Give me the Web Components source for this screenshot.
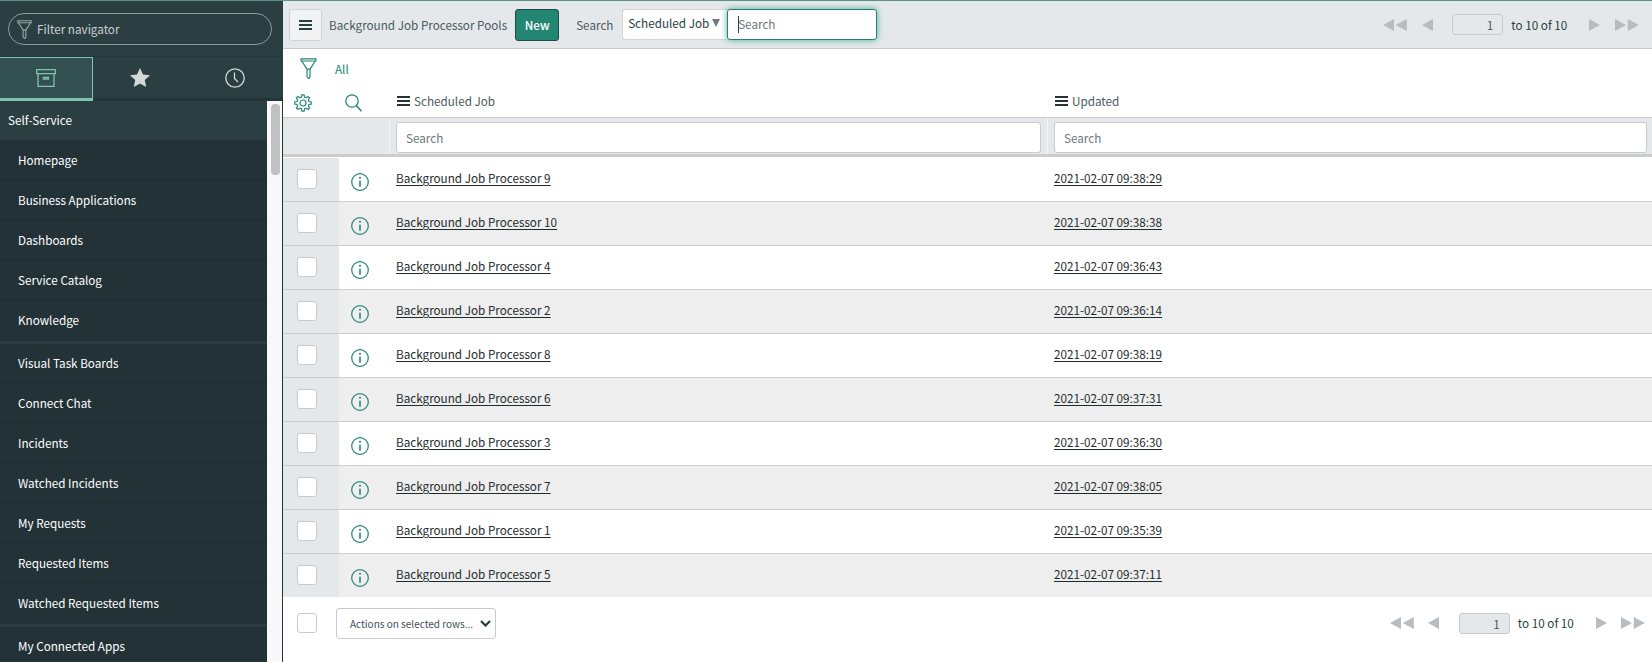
<!DOCTYPE html>
<html><head><meta charset="utf-8"><style>
html,body{margin:0;padding:0;height:662px;overflow:hidden;background:#fff}
body{font-family:"Noto Sans CJK SC","Open Sans",sans-serif;font-size:11.7px;color:#293e40}
</style></head><body>
<sn-app>
<sn-nav slot="nav">
<sn-nav-item>Homepage</sn-nav-item>
<sn-nav-item>Business Applications</sn-nav-item>
<sn-nav-item>Dashboards</sn-nav-item>
<sn-nav-item>Service Catalog</sn-nav-item>
<sn-nav-item group>Knowledge</sn-nav-item>
<sn-nav-item first>Visual Task Boards</sn-nav-item>
<sn-nav-item>Connect Chat</sn-nav-item>
<sn-nav-item>Incidents</sn-nav-item>
<sn-nav-item>Watched Incidents</sn-nav-item>
<sn-nav-item>My Requests</sn-nav-item>
<sn-nav-item>Requested Items</sn-nav-item>
<sn-nav-item group>Watched Requested Items</sn-nav-item>
<sn-nav-item lift>My Connected Apps</sn-nav-item>
</sn-nav>
<sn-list slot="main">
<sn-row name="Background Job Processor 9" date="2021-02-07 09:38:29"></sn-row>
<sn-row alt name="Background Job Processor 10" date="2021-02-07 09:38:38"></sn-row>
<sn-row name="Background Job Processor 4" date="2021-02-07 09:36:43"></sn-row>
<sn-row alt name="Background Job Processor 2" date="2021-02-07 09:36:14"></sn-row>
<sn-row name="Background Job Processor 8" date="2021-02-07 09:38:19"></sn-row>
<sn-row alt name="Background Job Processor 6" date="2021-02-07 09:37:31"></sn-row>
<sn-row name="Background Job Processor 3" date="2021-02-07 09:36:30"></sn-row>
<sn-row alt name="Background Job Processor 7" date="2021-02-07 09:38:05"></sn-row>
<sn-row name="Background Job Processor 1" date="2021-02-07 09:35:39"></sn-row>
<sn-row alt last name="Background Job Processor 5" date="2021-02-07 09:37:11"></sn-row>
</sn-list>
</sn-app>
<script>
const FONT='"Noto Sans CJK SC","Open Sans",sans-serif';
const FS='11.7px';
function def(name,html){
  customElements.define(name,class extends HTMLElement{
    constructor(){super();this.attachShadow({mode:'open'}).innerHTML=typeof html==='function'?'':html;}
    connectedCallback(){if(typeof html==='function'&&!this.shadowRoot.childNodes.length)this.shadowRoot.innerHTML=html(this);}
  });
}
const burger=(w=13,c='#293e40',t=2)=>`<svg width="${w}" height="10" viewBox="0 0 13 10" style="display:block;flex:none"><path d="M0 1h13M0 5h13M0 9h13" stroke="${c}" stroke-width="${t}"/></svg>`;
const funnel=(c,w,h)=>`<svg width="${w}" height="${h}" viewBox="0 0 16 21" fill="none" stroke="${c}" stroke-width="1.2" style="display:block;flex:none"><path d="M.6.8h14.8v2.2H.6zM1.200 3l5.300 8.200h3L14.800 3M6.500 11.200v7.600l1.600 1.600h.4l1-1.600v-7.600"/></svg>`;
const tri=(d)=>d==='l'?'M11 0v12L0 6z':'M0 0v12l11-6z';
const arrows=(kind)=>`<svg width="${kind.length*12.4}" height="12" viewBox="0 0 ${kind.length*12.4} 12" style="display:block;flex:none" fill="#b9bcbf">${[...kind].map((k,i)=>`<path transform="translate(${i*12.8})" d="${tri(k)}"/>`).join('')}</svg>`;
const gearPath=(()=>{let d='';const N=8,cx=9,cy=9,Ro=8.3,Ri=6.1;for(let i=0;i<N;i++){const a=i*2*Math.PI/N-Math.PI/2,w=Math.PI/N;
  const p=(r,t)=>`${(cx+r*Math.cos(t)).toFixed(2)} ${(cy+r*Math.sin(t)).toFixed(2)}`;
  d+=(i?'L':'M')+p(Ri,a-w*.62)+'L'+p(Ro,a-w*.36)+'L'+p(Ro,a+w*.36)+'L'+p(Ri,a+w*.62);}
  return d+'Z';})();

def('sn-app',`<style>
:host{display:flex;width:1652px;height:662px;overflow:hidden}
.nav{flex:0 0 283px;height:662px;display:flex;flex-direction:column}
.main{flex:1;min-width:0;display:flex;flex-direction:column}
</style><div class="nav"><slot name="nav"></slot></div><div class="main"><slot name="main"></slot></div>`);

def('sn-nav',`<style>
:host{display:flex;flex-direction:column;height:662px;background:#2b3e42;border-top:1px solid #5b9181;box-sizing:border-box;font-family:${FONT};color:#fff}
.top{flex:0 0 56px;box-sizing:border-box;padding:12px 11px 0 8px;border-bottom:1px solid #25383c}
.pill{height:32px;box-sizing:border-box;border:1px solid #8c9a9c;border-radius:16px;display:flex;align-items:center;gap:5px;padding:0 0 0 8px;color:#c9d0d1;font-size:${FS};line-height:20px}
.tabs{flex:0 0 44px;display:flex;box-sizing:border-box}
.tab{display:flex;align-items:center;justify-content:center;box-sizing:border-box;border-bottom:3px solid #243539}
.tab.on{flex:0 0 93px;background:#31504f;border:1px solid #7fc4b1;border-bottom:3px solid #7fc4b1;border-left:0}
.tab.s{flex:0 0 94px}
.tab.c{flex:0 0 96px}
.body{flex:1;display:flex;min-height:0;border-right:1px solid #22353a}
.list{flex:1;min-width:0;overflow:hidden;background:#223237}
.head{height:39px;box-sizing:border-box;background:#2b3f43;display:flex;align-items:center;padding:0 0 2px 8px;font-size:${FS};line-height:20px}
.bar{flex:0 0 15px;background:#f8f8f8;box-sizing:border-box;padding:3px 2px 0 4px}
.thumb{height:71px;background:#c1c1c1;border-radius:4px}
</style>
<div class="top"><div class="pill">${funnel('#9ba7a8',15,19)}<span>Filter navigator</span></div></div>
<div class="tabs">
<div class="tab on"><svg width="20" height="18" viewBox="0 0 20 18" fill="none" stroke="#7fc4b1" stroke-width="1.300"><path d="M.7.7h18.600v4H.7zM2 4.700v12.600h16V4.700M7.500 8.500h5v1.600h-5z"/></svg></div>
<div class="tab s"><svg width="20" height="19" viewBox="0 0 20 19" fill="#d3d8d9"><path d="M10 0l3 6.400 7 .8-5.200 4.700 1.400 7L10 15.400 3.800 18.900l1.400-7L0 7.200l7-.8z"/></svg></div>
<div class="tab c"><svg width="20" height="20" viewBox="0 0 20 20" fill="none" stroke="#d3d8d9" stroke-width="1.300"><circle cx="10" cy="10" r="9.200"/><path d="M9.500 4.500v6l3.500 3.500"/></svg></div>
</div>
<div class="body"><div class="list"><div class="head">Self-Service</div><slot></slot></div><div class="bar"><div class="thumb"></div></div></div>`);

def('sn-nav-item',`<style>
:host{display:flex;align-items:center;box-sizing:border-box;height:40px;padding-left:18px;font-size:${FS};line-height:20px;color:#fff;border-bottom:1px solid #1c2b30}
:host([group]){height:44px;padding-bottom:2px;border-bottom:3px solid #2b3f43}
:host([first]){height:39px}
:host([lift]){padding-bottom:2px}
</style><slot></slot>`);

def('sn-pager',`<style>
:host{display:flex;align-items:center;font-size:${FS};line-height:20px;color:#293e40;font-family:${FONT}}
.in{width:51px;height:21px;box-sizing:border-box;margin:0 8px 0 18px;border:1px solid #c8cbcd;border-radius:3px;background:#e4e8ea;text-align:right;padding-right:9px;line-height:19px;color:#4a5a60}
.t{width:60px;white-space:nowrap}
.r{margin-left:18px;margin-right:13px}
</style>${arrows('ll')}<span style="width:14px"></span>${arrows('l')}<span class="in">1</span><span class="t">to 10 of 10</span><span class="r">${arrows('r')}</span>${arrows('rr')}`);

def('sn-list',`<style>
:host{display:flex;flex-direction:column;height:662px;font-family:${FONT};font-size:${FS};color:#293e40;background:#fff;box-sizing:border-box;border-top:1px solid #5b9181}
.tb{flex:0 0 48px;box-sizing:border-box;background:#e4e8ea;border-bottom:1px solid #c7cacc;display:flex;align-items:center;padding:0 12.500px 0 6px;line-height:20px}
.hb{width:33px;height:32px;box-sizing:border-box;background:#f1f3f4;border:1px solid #d0d4d6;border-radius:3px;display:flex;align-items:center;justify-content:center;margin-right:7px}
.ttl{color:#4a5a60;margin-right:8px;white-space:nowrap}
.new{width:44px;height:32px;box-sizing:border-box;background:#238672;border:1px solid #1b4c46;border-radius:3px;color:#fff;font-weight:500;display:flex;align-items:center;justify-content:center;margin-right:17px}
.sl{color:#4a5a60;width:46px}
.sel{width:105px;height:31px;box-sizing:border-box;background:#fff;border:1px solid #d0d4d6;border-right:0;border-radius:3px 0 0 3px;display:flex;align-items:center;padding:0 0 2px 5px;white-space:nowrap;color:#293e40;margin-bottom:1px}
.sel i{width:0;height:0;border:4px solid transparent;border-top:8px solid #727c80;border-bottom:0;margin-left:3px}
.inp{width:150px;height:31px;box-sizing:border-box;background:#fff;border:1px solid #1f8476;border-radius:3px;box-shadow:0 0 6px #4ea998;display:flex;align-items:center;padding-left:10px;color:#6b777b;margin-bottom:1px}
.inp b{display:block;width:1px;height:17px;background:#293e40;margin-right:-1px}
.sp{flex:1}
.fr{flex:0 0 34px;display:flex;align-items:center;padding:4px 0 0 16px;box-sizing:border-box;gap:17px;color:#238672;font-size:${FS}}
.fr span{margin-top:1px}
.hd{flex:0 0 35px;box-sizing:border-box;border-bottom:1px solid #c7cacc;display:flex;align-items:center;color:#4a5a60;line-height:20px;padding-top:2px}
.c1{flex:0 0 62px;box-sizing:border-box;padding:4px 0 0 11px;display:flex}
.c2{flex:0 0 52px;display:flex;padding-top:4px}
.c3{flex:0 0 658px;display:flex;align-items:center}
.c4{flex:1;display:flex;align-items:center}
.c3 span,.c4 span{margin-left:4px}
.flt{flex:0 0 39px;box-sizing:border-box;display:flex;border-bottom:3px solid #ccc;background:#e4e8ea}
.flt .l{flex:0 0 107px;border-right:1px solid #f4f5f6;box-sizing:border-box}
.flt .a{flex:0 0 658px;padding:4px 6px 0 6px;box-sizing:border-box;border-right:1px solid #f4f5f6}
.flt .b{flex:1;padding:4px 5px 0 6px;box-sizing:border-box}
.box{height:31px;box-sizing:border-box;background:#fff;border:1px solid #c8cbcd;border-radius:3px;padding-left:9px;display:flex;align-items:center;color:#6b777b;line-height:20px}
.rows{padding-top:1px;display:flex;flex-direction:column}
.ft{flex:0 0 52px;display:flex;align-items:center;padding:0 6px 0 14px;box-sizing:border-box}
.ck{width:20px;height:20px;box-sizing:border-box;background:#fff;border:1px solid #c8cbcd;border-radius:3px;margin-right:19px}
.act{width:160px;height:31px;box-sizing:border-box;background:#fff;border:1px solid #c8cbcd;border-radius:3px;display:flex;align-items:center;justify-content:space-between;padding:0 4px 0 13px;font-size:10px;color:#3f4f54;white-space:nowrap}
</style>
<div class="tb">
<div class="hb">${burger()}</div><span class="ttl">Background Job Processor Pools</span><div class="new">New</div>
<span class="sl">Search</span><div class="sel">Scheduled Job<i></i></div><div class="inp"><b></b>Search</div>
<div class="sp"></div><sn-pager></sn-pager></div>
<div class="fr">${funnel('#238672',19,21)}<span>All</span></div>
<div class="hd"><div class="c1"><svg width="18" height="18" viewBox="0 0 18 18" fill="none" stroke="#238672" stroke-width="1.200" style="flex:none"><circle cx="9" cy="9" r="3"/><path d="${gearPath}" stroke-linejoin="round"/></svg></div>
<div class="c2"><svg width="17" height="18" viewBox="0 0 17 18" fill="none" stroke="#238672" stroke-width="1.300" style="flex:none"><circle cx="7" cy="7" r="6.200"/><path d="M11.500 11.800l5 5.500" stroke-width="1.600"/></svg></div>
<div class="c3">${burger(13,'#263236',2)}<span>Scheduled Job</span></div><div class="c4">${burger(13,'#263236',2)}<span>Updated</span></div></div>
<div class="flt"><div class="l"></div><div class="a"><div class="box">Search</div></div><div class="b"><div class="box">Search</div></div></div>
<div class="rows"><slot></slot></div>
<div class="ft"><div class="ck"></div><div class="act">Actions on selected rows...<svg width="11" height="7" viewBox="0 0 11 7" fill="none" stroke="#293e40" stroke-width="2.200"><path d="M1 1l4.500 4.500L10 1"/></svg></div><div class="sp"></div><sn-pager></sn-pager></div>`);

def('sn-row',(el)=>`<style>
:host{display:flex;height:${el.hasAttribute('last')?43:44}px;box-sizing:border-box;${el.hasAttribute('last')?'':'border-bottom:1px solid #ccc;'}background:${el.hasAttribute('alt')?'#eee':'#fff'};font-size:${FS};line-height:20px;color:#1e2a2c}
.c1{flex:0 0 56px;background:#e4e8ea;box-sizing:border-box;padding:11px 0 0 14px}
.ck{width:20px;height:20px;box-sizing:border-box;background:#fff;border:1px solid #c8cbcd;border-radius:3px}
.c2{flex:0 0 33px;box-sizing:border-box;padding:14.500px 0 0 12px}
.c3{flex:0 0 670px;box-sizing:border-box;padding:10px 0 0 24px}
.c4{flex:1;box-sizing:border-box;padding:10px 0 0 12px}
a{color:#1e2a2c;text-decoration:underline;text-underline-offset:2px}
</style><div class="c1"><div class="ck"></div></div>
<div class="c2"><svg width="18" height="18" viewBox="0 0 18 18" fill="none" stroke="#238672" stroke-width="1.200" style="display:block"><circle cx="9" cy="9" r="8.300"/><path d="M9 7.800v6" stroke-width="1.600"/><circle cx="9" cy="4.800" r="1" fill="#238672" stroke="none"/></svg></div>
<div class="c3"><a>${el.getAttribute('name')}</a></div><div class="c4"><a>${el.getAttribute('date')}</a></div>`);
</script>
</body></html>
